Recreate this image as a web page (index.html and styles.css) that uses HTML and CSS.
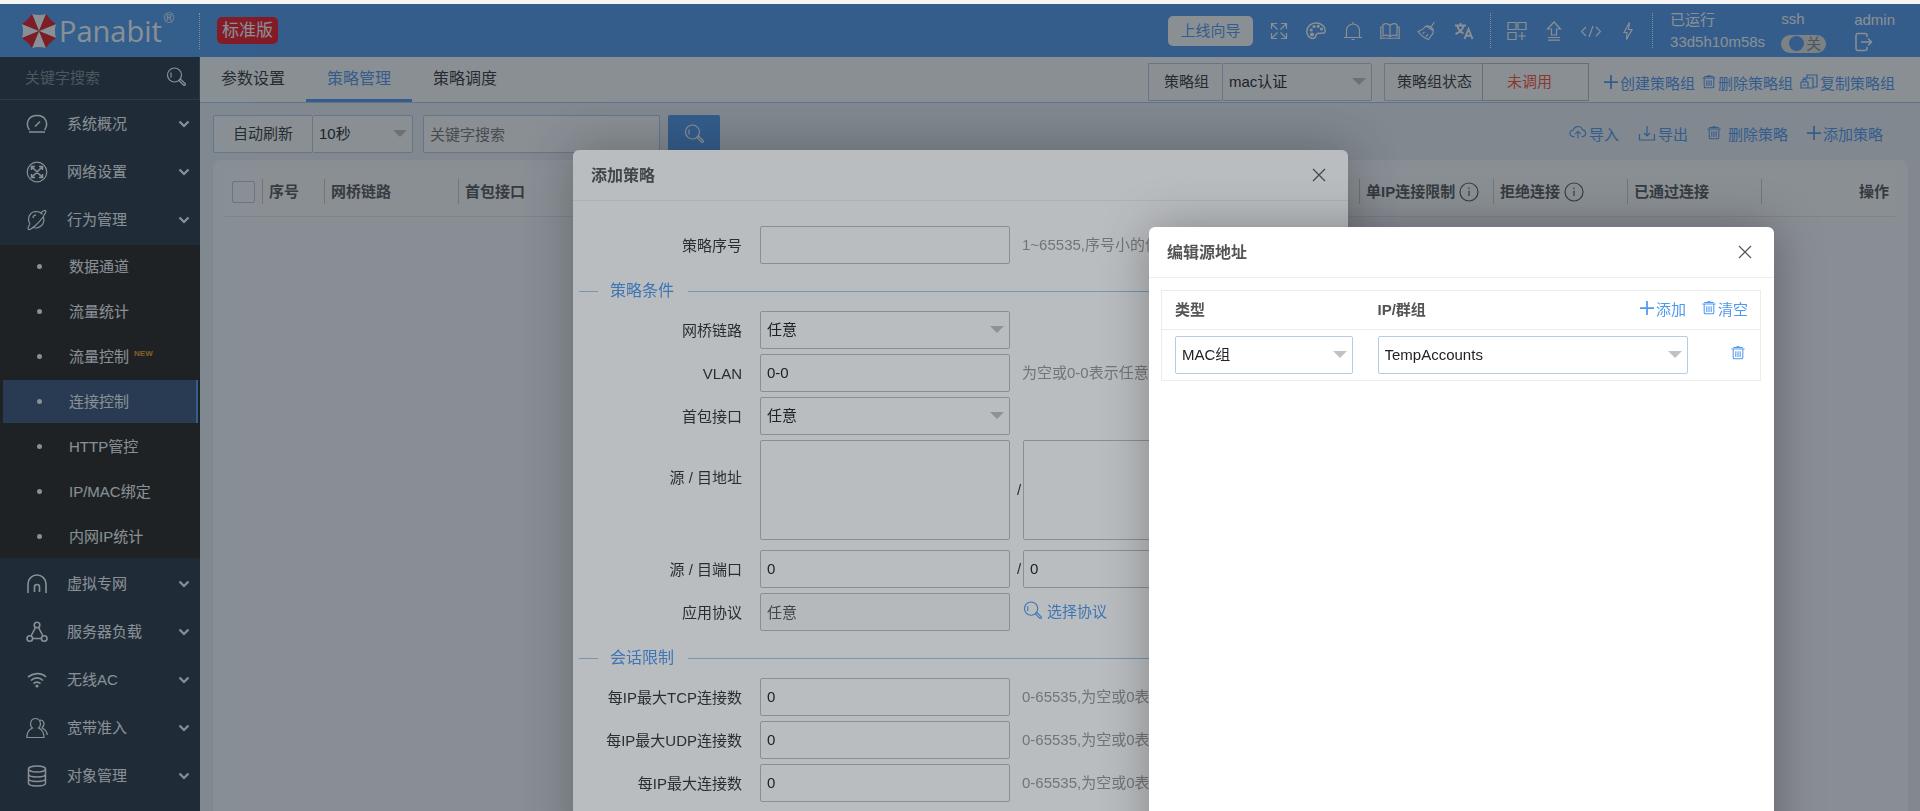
FILE: index.html
```html
<!DOCTYPE html>
<html lang="zh-CN">
<head>
    <meta charset="UTF-8">
    <meta name="viewport" content="width=device-width, initial-scale=1.0">
    <title>Panabit</title>
    <link rel="stylesheet" href="styles.css">
</head>
<body>
    <svg class="symbols" aria-hidden="true">
        <symbol id="i-search" viewBox="0 0 20 20"><circle cx="8.500" cy="8" r="7"/><path d="M5 5.500v5M13 13.500l1.500-1.500 4.500 4.500a1 1 0 0 1-1.500 1.500z"/></symbol>
        <symbol id="i-full" viewBox="0 0 20 20"><path d="M2.500 8V2.500H8M2.500 2.500l6 6M12 2.500h5.500V8M17.500 2.500l-6 6M2.500 12v5.500H8M2.500 17.500l6-6M17.500 12v5.500H12M17.500 17.500l-6-6"/></symbol>
        <symbol id="i-palette" viewBox="0 0 20 20"><path stroke-width="1.500" d="M10 2C4.500 2 .8 5.800.8 10.500c0 4 3 7 6.200 7 3.500 0 2-3 3.500-4.500 2.200-2.200 8.700 1.500 8.700-3.500C19.200 5 15 2 10 2z"/><g fill="currentColor"><circle cx="5.200" cy="9" r="1"/><circle cx="8" cy="5.500" r="1"/><circle cx="12.200" cy="5.300" r="1"/><circle cx="15.500" cy="8" r="1"/><circle cx="6" cy="13.500" r="1.500"/></g></symbol>
        <symbol id="i-bell" viewBox="0 0 20 20"><path d="M1 16.500h18M3.500 16.500V9.500a6.500 6.500 0 0 1 13 0v7M10 1v2M8.500 18.500h3"/></symbol>
        <symbol id="i-book" viewBox="0 0 20 20"><path d="M10 4.500C8 2.500 5 2.500 3 3.500V15c2-1 5-1 7 .8 2-1.800 5-1.800 7-.8V3.500c-2-1-5-1-7 1zM10 4.500V16M3 6H.8v11.500c3-.6 6-.8 9.200 0 3.200-.8 6.200-.6 9.200 0V6H17"/></symbol>
        <symbol id="i-brush" viewBox="0 0 20 20"><path d="M17.500 1l-3.500 5 2.500 3M9 5l7.500 5M9 5C6.500 8.500 4 9.500 1 10.500c3 4 6 6.500 10.500 8 1.500-3.500 5-4.500 5-8.500zM9.500 4.800L13 5.500l3.500 3M5.500 12.500l2-1.500M9 15.500l2-2"/></symbol>
        <symbol id="i-lang" viewBox="0 0 20 20"><path stroke-width="1.900" d="M1 4.500h11M6.500 2v2.500M9.500 5C8.500 9 5.500 11.500 1.500 13M3.500 5.500C4.500 9 7 11 9.500 12.500M10.500 18l4-10 4 10M12 14.800h5"/></symbol>
        <symbol id="i-grid" viewBox="0 0 20 20"><path d="M1 1.500h8v7H1zM11 1.500h8v7h-8zM1 11.500h8v7H1zM15 11v8M11 15h8"/></symbol>
        <symbol id="i-upload" viewBox="0 0 20 20"><path d="M7.500 14V8H3.500L10 1l6.500 7h-4v6zM4 16.500h12M4 19.200h12"/></symbol>
        <symbol id="i-code" viewBox="0 0 20 20"><path d="M5 6l-4.500 4.500L5 15M15 6l4.500 4.500L15 15M12 5L8 16"/></symbol>
        <symbol id="i-bolt" viewBox="0 0 20 20"><path d="M11.500 1.500L6 11.500h3l-.5 7L14 8.500h-3.500z"/></symbol>
        <symbol id="i-exit" viewBox="0 0 20 20"><path stroke-width="1.500" d="M13 5V3.500a2 2 0 0 0-2-2H4a2 2 0 0 0-2 2v13a2 2 0 0 0 2 2h7a2 2 0 0 0 2-2V15M7 10h11M14 6.500l3.500 3.500-3.500 3.500"/></symbol>
        <symbol id="i-gauge" viewBox="0 0 22 22"><path stroke-width="1.500" d="M3 19h16M3.500 17C-1 11 2 2.500 11 2.500S23 11 18.500 17M9 13.500l5-5"/></symbol>
        <symbol id="i-net" viewBox="0 0 22 22"><circle cx="11" cy="11" r="9.800"/><path stroke-width="1.500" d="M5.500 5.500l11 11M16.500 5.500l-11 11M5.500 9V5.500H9M13 5.500h3.500V9M5.500 13v3.500H9M13 16.500h3.500V13"/></symbol>
        <symbol id="i-planet" viewBox="0 0 22 22"><path d="M4 15C.5 9 4 2.800 10 2.500c3 0 5 1 6.500 2.800M17.500 8c1.500 5-1 10-7 11-1.500 0-3-.2-4-1M4 15c-2 3-2.500 5-1.500 5.500C5 21 13 14 17 8c2.500-4 3.500-6 2.500-6.500-1-.3-3 .8-5 2.500M7 9c0-2 1.200-3 3-3.200"/></symbol>
        <symbol id="i-arch" viewBox="0 0 22 22"><path stroke-width="1.600" d="M2 20v-9a9 9 0 0 1 18 0v9M8.500 19v-5a2.500 2.500 0 0 1 5 0v5"/></symbol>
        <symbol id="i-nodes" viewBox="0 0 22 22"><g stroke-width="1.600"><circle cx="11" cy="4" r="2.800"/><circle cx="3.800" cy="17.500" r="2.800"/><circle cx="18.200" cy="17.500" r="2.800"/><path d="M9.500 6.500L5 15M12.500 6.500L17 15M6.500 17.500h9"/></g></symbol>
        <symbol id="i-wifi" viewBox="0 0 22 22"><path stroke-width="1.700" d="M2 8c5-4 13-5 18 0M5 11.500c3.500-3.500 8.500-3.500 12 0M7.500 14.500c2.500-2 4.500-2 7 0"/><circle cx="11" cy="17" r="1" fill="currentColor"/></symbol>
        <symbol id="i-users" viewBox="0 0 22 22"><path d="M6.500 11C3 8 4.500 1.500 9.500 1.500S16 8 12.500 11c3.500 1.500 5.500 4 5.500 9.500H.8C.8 15 3 12.500 6.500 11zM14 3c4 0 5.500 4.500 2 8 3.500 1.500 5 3.500 5.200 7"/></symbol>
        <symbol id="i-db" viewBox="0 0 22 22"><g stroke-width="1.500"><ellipse cx="11" cy="4" rx="8.500" ry="3"/><path d="M2.500 4v14c0 4 17 4 17 0V4M2.500 9c0 4 17 4 17 0M2.500 13.500c0 4 17 4 17 0"/></g></symbol>
        <symbol id="i-down" viewBox="0 0 12 12"><path stroke-width="2.200" d="M1.500 3.500L6 8l4.500-4.500"/></symbol>
        <symbol id="i-plus" viewBox="0 0 16 16"><path stroke-width="2" d="M8 0v16M0 8h16"/></symbol>
        <symbol id="i-trash" viewBox="0 0 16 16"><path d="M.5 3.500h15M2.500 1.800h11M6 1h4M2.500 4v9a1.500 1.500 0 0 0 1.500 1.500h8a1.500 1.500 0 0 0 1.500-1.500V4M5.500 6v6.500M8 6v6.500M10.500 6v6.500"/></symbol>
        <symbol id="i-copy" viewBox="0 0 18 16"><path d="M7 4V1h10v12h-4M4 6V4h9v10H8M1 8h7v6H1zM3 8V5.500h3V8M3 11h3"/></symbol>
        <symbol id="i-cloud" viewBox="0 0 20 16"><path d="M6 12H4.500A3.500 3.500 0 0 1 4.500 5 5.500 5.500 0 0 1 15 4.500a3.800 3.800 0 0 1 .5 7.500H14M10 14V6.500M7 9l3-3 3 3"/></symbol>
        <symbol id="i-export" viewBox="0 0 18 16"><path d="M1.500 9v6h15V9M9 1v10M6 8l3 3 3-3"/></symbol>
        <symbol id="i-close" viewBox="0 0 14 14"><path d="M1 1l12 12M13 1L1 13"/></symbol>
        <symbol id="i-info" viewBox="0 0 20 20"><circle cx="10" cy="10" r="9"/><path d="M10 8.500V14M10 5.500V7"/></symbol>
    </svg>

    <header class="header">
        <div class="logo">
            <svg class="logo-mark" viewBox="-18 -18 36 36">
                <path fill="#fff" d="M-7-17Q0-15 7-17L0 0zM17-7Q15 0 17 7L0 0zM7 17Q0 15-7 17L0 0zM-17 7Q-15 0-17-7L0 0z"/>
                <path fill="#e8141c" d="M7-17Q11-11 17-7L0 0zM17 7Q11 11 7 17L0 0zM-7 17Q-11 11-17 7L0 0zM-17-7Q-11-11-7-17L0 0z"/>
            </svg>
            <span class="logo-name">Panabit</span><span class="logo-reg">®</span>
        </div>
        <span class="badge">标准版</span>
        <button class="guide" type="button">上线向导</button>
        <nav class="tools">
            <button type="button" aria-label="全屏"><svg><use href="#i-full"/></svg></button>
            <button type="button" aria-label="主题"><svg><use href="#i-palette"/></svg></button>
            <button type="button" aria-label="通知"><svg><use href="#i-bell"/></svg></button>
            <button type="button" aria-label="手册"><svg><use href="#i-book"/></svg></button>
            <button type="button" aria-label="清理"><svg><use href="#i-brush"/></svg></button>
            <button type="button" aria-label="语言"><svg><use href="#i-lang"/></svg></button>
        </nav>
        <nav class="tools tools-sys">
            <button type="button" aria-label="应用"><svg><use href="#i-grid"/></svg></button>
            <button type="button" aria-label="升级"><svg><use href="#i-upload"/></svg></button>
            <button type="button" aria-label="终端"><svg><use href="#i-code"/></svg></button>
            <button type="button" aria-label="电源"><svg><use href="#i-bolt"/></svg></button>
        </nav>
        <div class="status uptime"><span>已运行</span><span>33d5h10m58s</span></div>
        <div class="status ssh">
            <label for="ssh">ssh</label>
            <label class="switch"><input type="checkbox" id="ssh"><span>关</span></label>
        </div>
        <div class="status user">
            <span>admin</span>
            <button type="button" aria-label="退出"><svg><use href="#i-exit"/></svg></button>
        </div>
    </header>

    <div class="layout">
        <aside class="sidebar">
            <div class="side-search">
                <input type="text" placeholder="关键字搜索" aria-label="关键字搜索">
                <svg><use href="#i-search"/></svg>
            </div>
            <nav class="menu">
                <a href="#"><svg><use href="#i-gauge"/></svg>系统概况<svg class="arrow"><use href="#i-down"/></svg></a>
                <a href="#"><svg><use href="#i-net"/></svg>网络设置<svg class="arrow"><use href="#i-down"/></svg></a>
                <a href="#"><svg><use href="#i-planet"/></svg>行为管理<svg class="arrow"><use href="#i-down"/></svg></a>
                <div class="submenu">
                    <a href="#">数据通道</a>
                    <a href="#">流量统计</a>
                    <a href="#">流量控制<span class="new">NEW</span></a>
                    <a href="#" class="active">连接控制</a>
                    <a href="#">HTTP管控</a>
                    <a href="#">IP/MAC绑定</a>
                    <a href="#">内网IP统计</a>
                </div>
                <a href="#"><svg><use href="#i-arch"/></svg>虚拟专网<svg class="arrow"><use href="#i-down"/></svg></a>
                <a href="#"><svg><use href="#i-nodes"/></svg>服务器负载<svg class="arrow"><use href="#i-down"/></svg></a>
                <a href="#"><svg><use href="#i-wifi"/></svg>无线AC<svg class="arrow"><use href="#i-down"/></svg></a>
                <a href="#"><svg><use href="#i-users"/></svg>宽带准入<svg class="arrow"><use href="#i-down"/></svg></a>
                <a href="#"><svg><use href="#i-db"/></svg>对象管理<svg class="arrow"><use href="#i-down"/></svg></a>
            </nav>
        </aside>

        <main class="main">
            <div class="tabbar">
                <nav class="tabs">
                    <a href="#">参数设置</a>
                    <a href="#" class="active">策略管理</a>
                    <a href="#">策略调度</a>
                </nav>
                <div class="group-bar">
                    <div class="combo">
                        <label for="group">策略组</label>
                        <div class="select group-select"><select id="group"><option>mac认证</option></select></div>
                    </div>
                    <div class="combo state">
                        <span class="combo-label">策略组状态</span>
                        <span class="state-value">未调用</span>
                    </div>
                    <div class="group-links">
                        <a href="#" class="link"><svg><use href="#i-plus"/></svg>创建策略组</a>
                        <a href="#" class="link"><svg><use href="#i-trash"/></svg>删除策略组</a>
                        <a href="#" class="link"><svg class="wide"><use href="#i-copy"/></svg>复制策略组</a>
                    </div>
                </div>
            </div>

            <div class="content">
                <div class="toolbar">
                    <div class="combo refresh">
                        <label for="refresh">自动刷新</label>
                        <div class="select"><select id="refresh"><option>10秒</option></select></div>
                    </div>
                    <input class="keyword" type="text" placeholder="关键字搜索" aria-label="关键字搜索">
                    <button class="search-btn" type="button" aria-label="搜索"><svg><use href="#i-search"/></svg></button>
                    <div class="toolbar-links">
                        <a href="#" class="link"><svg class="wide"><use href="#i-cloud"/></svg>导入</a>
                        <a href="#" class="link"><svg class="wide"><use href="#i-export"/></svg>导出</a>
                        <a href="#" class="link spaced"><svg><use href="#i-trash"/></svg>删除策略</a>
                        <a href="#" class="link"><svg><use href="#i-plus"/></svg>添加策略</a>
                    </div>
                </div>

                <div class="panel">
                    <table class="grid">
                        <colgroup>
                            <col class="c-check"><col class="c-no"><col class="c-mid"><col>
                            <col class="c-mid"><col class="c-mid"><col class="c-mid"><col class="c-mid">
                        </colgroup>
                        <thead>
                            <tr>
                                <th><input type="checkbox" aria-label="全选"></th>
                                <th><div>序号</div></th>
                                <th><div>网桥链路</div></th>
                                <th><div>首包接口</div></th>
                                <th><div>单IP连接限制<svg><use href="#i-info"/></svg></div></th>
                                <th><div>拒绝连接<svg><use href="#i-info"/></svg></div></th>
                                <th><div>已通过连接</div></th>
                                <th><div class="right">操作</div></th>
                            </tr>
                        </thead>
                    </table>
                </div>
            </div>
        </main>
    </div>

    <div class="shade"></div>

    <section class="dialog policy" role="dialog" aria-labelledby="policyTitle">
        <div class="dialog-head">
            <h2 id="policyTitle">添加策略</h2>
            <button type="button" aria-label="关闭"><svg><use href="#i-close"/></svg></button>
        </div>
        <form class="policy-form">
            <div class="row">
                <label for="no">策略序号</label>
                <input type="text" id="no">
                <span class="hint">1~65535,序号小的优先</span>
            </div>
            <h3 class="section"><span>策略条件</span></h3>
            <div class="row">
                <label for="bridge">网桥链路</label>
                <div class="select"><select id="bridge"><option>任意</option></select></div>
            </div>
            <div class="row">
                <label for="vlan">VLAN</label>
                <input type="text" id="vlan" value="0-0">
                <span class="hint">为空或0-0表示任意</span>
            </div>
            <div class="row">
                <label for="iface">首包接口</label>
                <div class="select"><select id="iface"><option>任意</option></select></div>
            </div>
            <div class="row row-area">
                <label for="srcAddr">源 / 目地址</label>
                <textarea id="srcAddr"></textarea>
                <span class="slash">/</span>
                <textarea aria-label="目地址"></textarea>
            </div>
            <div class="row">
                <label for="srcPort">源 / 目端口</label>
                <input type="text" id="srcPort" value="0">
                <span class="slash">/</span>
                <input type="text" value="0" aria-label="目端口">
            </div>
            <div class="row">
                <label for="proto">应用协议</label>
                <input type="text" id="proto" value="任意" disabled>
                <a href="#" class="link pick"><svg><use href="#i-search"/></svg>选择协议</a>
            </div>
            <h3 class="section"><span>会话限制</span></h3>
            <div class="row">
                <label for="tcp">每IP最大TCP连接数</label>
                <input type="text" id="tcp" value="0">
                <span class="hint">0-65535,为空或0表示不限制</span>
            </div>
            <div class="row">
                <label for="udp">每IP最大UDP连接数</label>
                <input type="text" id="udp" value="0">
                <span class="hint">0-65535,为空或0表示不限制</span>
            </div>
            <div class="row">
                <label for="conn">每IP最大连接数</label>
                <input type="text" id="conn" value="0">
                <span class="hint">0-65535,为空或0表示不限制</span>
            </div>
        </form>
    </section>

    <div class="shade"></div>

    <section class="dialog source" role="dialog" aria-labelledby="sourceTitle">
        <div class="dialog-head">
            <h2 id="sourceTitle">编辑源地址</h2>
            <button type="button" aria-label="关闭"><svg><use href="#i-close"/></svg></button>
        </div>
        <table class="addr">
            <colgroup><col class="c-type"><col class="c-ip"><col></colgroup>
            <thead>
                <tr>
                    <th>类型</th>
                    <th class="ip-head">
                        IP/群组
                    </th>
                    <th class="links-head">
                        <div class="addr-links">
                            <a href="#" class="link"><svg><use href="#i-plus"/></svg>添加</a>
                            <a href="#" class="link"><svg><use href="#i-trash"/></svg>清空</a>
                        </div>
                    </th>
                </tr>
            </thead>
            <tbody>
                <tr>
                    <td><div class="select type-select"><select aria-label="类型"><option>MAC组</option></select></div></td>
                    <td colspan="2">
                        <div class="ip-cell">
                            <div class="select ip-select"><select aria-label="IP/群组"><option>TempAccounts</option></select></div>
                            <a href="#" class="link remove" aria-label="删除"><svg><use href="#i-trash"/></svg></a>
                        </div>
                    </td>
                </tr>
            </tbody>
        </table>
    </section>
</body>
</html>
```
FILE: styles.css
```css
* {
    box-sizing: border-box;
}
html {
    overflow: hidden;
}
body {
    margin: 0;
    height: 100vh;
    display: flex;
    flex-direction: column;
    border-top: 4px solid #f4f6f6;
    font: 15px/20px "Liberation Sans", "Noto Sans CJK SC", sans-serif;
    color: #333;
    overflow: hidden;
}
a {
    color: inherit;
    text-decoration: none;
}
button {
    border: 0;
    padding: 0;
    background: none;
    color: inherit;
    font: inherit;
}
input, select, textarea {
    font: inherit;
    color: #222;
    background: #fff;
    border: 1px solid #b5cbe6;
    border-radius: 2px;
    outline: 0;
}
svg {
    display: block;
    flex: none;
    fill: none;
    stroke: currentColor;
    stroke-width: 1.2;
}
.symbols {
    display: none;
}

/* header */
.header {
    display: flex;
    align-items: center;
    height: 53px;
    flex: none;
    padding-right: 25px;
    background: #5099ec;
    color: #fff;
}
.logo {
    display: flex;
    align-items: center;
    width: 200px;
    height: 36px;
    padding-left: 21px;
    border-right: 1px dotted #fff;
}
.logo-mark {
    width: 36px;
    height: 36px;
    stroke: none;
}
.logo-name {
    margin-left: 2px;
    font: 500 29px/36px "Open Sans", sans-serif;
}
.logo-reg {
    align-self: flex-start;
    margin-left: 2px;
    font-size: 14px;
    line-height: 10px;
}
.badge {
    margin-left: 17px;
    padding: 0 5px;
    border-radius: 5px;
    background: #f2121e;
    font-size: 17px;
    line-height: 27px;
}
.guide {
    margin-left: auto;
    width: 85px;
    height: 30px;
    border-radius: 5px;
    background: #fff;
    color: #5099ec;
}
.tools {
    display: flex;
    align-items: center;
    gap: 17px;
    height: 35px;
    padding: 0 16px;
    border-right: 1px dotted #fff;
}
.tools-sys {
    padding-right: 14px;
}
.tools svg, .user svg {
    width: 20px;
    height: 20px;
}
.status {
    display: flex;
    flex-direction: column;
    gap: 2px;
    line-height: 20px;
}
.uptime {
    margin-left: 17px;
}
.ssh {
    gap: 6px;
    margin-left: 16px;
}
.user {
    margin-left: 28px;
}
.switch {
    display: flex;
    align-items: center;
    height: 18px;
    padding: 0 5px 0 8px;
    border-radius: 9px;
    background: #e2e2de;
    color: #888;
}
.switch input {
    appearance: none;
    width: 15px;
    height: 15px;
    margin: 0 2px 0 0;
    border: 0;
    border-radius: 50%;
    background: #5099ec;
}

/* sidebar */
.layout {
    display: flex;
    flex: 1;
    min-height: 0;
}
.sidebar {
    width: 200px;
    flex: none;
    background: #26313f;
    color: #fff;
    overflow: hidden;
}
.side-search {
    display: flex;
    align-items: center;
    height: 43px;
    padding: 0 13px 0 25px;
    border: solid #46505a;
    border-width: 0 1px 1px 0;
}
.side-search input {
    flex: 1;
    min-width: 0;
    padding: 0;
    border: 0;
    background: none;
    color: #fff;
}
.side-search input::placeholder {
    color: #85898e;
}
.side-search svg {
    width: 20px;
    height: 20px;
    margin-bottom: 3px;
}
.menu > a {
    display: flex;
    align-items: center;
    height: 47px;
    margin-bottom: 1px;
    padding: 0 10px 0 26px;
}
.menu > a svg {
    width: 22px;
    height: 22px;
    margin-right: 19px;
}
.menu > a .arrow {
    width: 12px;
    height: 12px;
    margin: 0 0 0 auto;
}
.submenu {
    margin: 2px 0 1px;
    background: #231e1a;
}
.submenu a {
    display: flex;
    align-items: center;
    height: 43px;
    margin: 0 2px 2px 3px;
    padding-left: 34px;
}
.submenu a::before {
    content: "";
    width: 5px;
    height: 5px;
    margin-right: 27px;
    border-radius: 50%;
    background: #fff;
}
.submenu .active {
    background: #385075;
    border-right: 2px solid #5099ec;
}
.new {
    margin: 0 0 6px 5px;
    color: #f59b20;
    font-size: 8px;
    font-weight: bold;
    line-height: 8px;
}

/* top tabs */
.main {
    display: flex;
    flex-direction: column;
    flex: 1;
    min-width: 0;
    background: #ecf0f4;
}
.tabbar {
    display: flex;
    height: 46px;
    background: #fff;
    border-bottom: 1px solid #aac6ea;
}
.tabs {
    display: flex;
    font-size: 16px;
    line-height: 40px;
}
.tabs a {
    padding: 2px 21px 0;
    border-bottom: 3px solid transparent;
}
.tabs .active {
    color: #5099ec;
    border-color: #5099ec;
}
.group-bar {
    display: flex;
    margin-left: auto;
    padding: 6px 25px 0 0;
}
.combo {
    display: flex;
    height: 38px;
    background: #fff;
}
.combo > label, .combo-label {
    padding: 0 13px 0 15px;
    line-height: 35px;
    border: 1px solid #b5cbe6;
    border-right: 0;
    border-radius: 2px 0 0 2px;
}
.combo .combo-label {
    padding: 0 10px 0 12px;
}
.combo.refresh > label {
    padding: 0 19px;
}
.refresh .select {
    width: 101px;
}
.group-select {
    width: 150px;
}
.state {
    margin: 0 15px 0 12px;
}
.state-value {
    padding: 0 36px 0 24px;
    border: 1px solid #bbb;
    color: #ff5030;
    line-height: 35px;
}
.select {
    position: relative;
    height: 38px;
}
.select select {
    appearance: none;
    width: 100%;
    height: 100%;
    padding: 0 24px 0 6px;
}
.select::after {
    content: "";
    position: absolute;
    right: 6px;
    top: 15px;
    border: 7px solid transparent;
    border-top-color: #c2c2c2;
    border-bottom: 0;
    pointer-events: none;
}
.group-links, .toolbar-links, .addr-links {
    display: flex;
    align-items: center;
}
.group-links {
    gap: 7px;
    padding-top: 2px;
}
.link {
    display: flex;
    align-items: center;
    gap: 2px;
    color: #4f98ee;
}
.link svg {
    width: 14px;
    height: 16px;
    margin-bottom: 4px;
}
.link .wide {
    width: 18px;
}

/* table page */
.content {
    display: flex;
    flex-direction: column;
    flex: 1;
    padding: 12px 12px 0 13px;
}
.toolbar {
    display: flex;
    margin-bottom: 7px;
}
.keyword {
    width: 237px;
    height: 38px;
    margin: 0 8px 0 10px;
    padding: 0 6px;
}
::placeholder {
    color: #757575;
}
.search-btn {
    display: flex;
    align-items: center;
    justify-content: center;
    width: 52px;
    border-radius: 2px;
    background: #5099ec;
    color: #fff;
}
.search-btn svg {
    width: 20px;
    height: 20px;
}
.toolbar-links {
    gap: 19px;
    margin-left: auto;
    padding: 2px 25px 0 0;
}
.spaced {
    gap: 7px;
}
.panel {
    flex: 1;
    padding: 8px 13px 0 12px;
    border-radius: 8px 8px 0 0;
    background: #fcfaff;
}
.grid {
    width: 100%;
    table-layout: fixed;
    border-collapse: collapse;
    background: #fff;
}
.c-check {
    width: 37px;
}
.c-no {
    width: 62px;
}
.c-mid {
    width: 134px;
}
.grid th {
    height: 48px;
    padding: 0;
    text-align: left;
    color: #555;
    border-bottom: 1px solid #e8e8e8;
}
.grid th div {
    display: flex;
    align-items: center;
    gap: 4px;
    height: 25px;
    padding-left: 6px;
    border-left: 1px solid #ccc;
}
.grid th .right {
    justify-content: flex-end;
    padding-right: 6px;
}
.grid svg {
    width: 20px;
    height: 20px;
}
.grid input {
    appearance: none;
    display: block;
    width: 23px;
    height: 22px;
    margin: 0 0 0 7px;
    border-color: #c8c8c8;
}

/* dialogs */
.shade {
    position: fixed;
    inset: 4px 0 0;
    background: rgba(25, 38, 48, .3);
}
.dialog {
    position: fixed;
    min-height: 700px;
    border-radius: 6px;
    background: #fff;
    box-shadow: 1px 1px 50px rgba(0, 0, 0, .3);
}
.policy {
    top: 150px;
    left: calc(50% - 387px);
    width: 775px;
}
.source {
    top: 227px;
    right: 146px;
    width: 625px;
}
.dialog-head {
    display: flex;
    align-items: center;
    justify-content: space-between;
    height: 51px;
    padding: 0 22px 0 18px;
    border-bottom: 1px solid #eee;
    color: #555;
}
.dialog-head h2 {
    margin: 0;
    padding-top: 2px;
    font-size: 16px;
    font-weight: 600;
}
.dialog-head svg {
    width: 14px;
    height: 14px;
}
.policy-form {
    padding: 25px 6px;
}
.row {
    display: flex;
    align-items: center;
    margin-bottom: 5px;
}
.row > label {
    width: 163px;
    margin-right: 18px;
    padding-top: 2px;
    text-align: right;
}
.row > input, .row .select, .row textarea {
    width: 250px;
    height: 38px;
}
.row input {
    padding: 0 6px 2px;
}
.row input, .row select, .row textarea {
    border-color: #bdbdbd;
}
.row input:disabled {
    background: #fafafa;
    color: #555;
}
.row textarea {
    height: 100px;
    resize: none;
}
.row-area {
    margin-bottom: 10px;
}
.row-area label {
    align-self: flex-start;
    margin-top: 26px;
}
.slash {
    width: 13px;
    padding-left: 7px;
}
.hint {
    margin-left: 12px;
    color: #999;
}
.pick {
    margin-left: 13px;
    gap: 5px;
}
.pick svg {
    width: 19px;
    height: 19px;
}
.section {
    display: flex;
    align-items: center;
    margin: 17px 0 10px;
    color: #4f98ee;
    font-size: 16px;
    font-weight: 400;
}
.section::before, .section::after {
    content: "";
    width: 19px;
    border-top: 1px solid #a4c3ea;
}
.section::after {
    flex: 1;
}
.section span {
    padding: 0 14px 0 12px;
}
.addr {
    width: 600px;
    margin: 12px;
    table-layout: fixed;
    border-collapse: collapse;
    border: 1px solid #ececec;
}
.addr th, .addr td {
    padding: 0 12px 0 13px;
    text-align: left;
    color: #555;
}
.addr th {
    height: 39px;
    border-bottom: 1px solid #ececec;
}
.addr td {
    height: 51px;
}
.c-type {
    width: 203px;
}
.c-ip {
    width: 240px;
}
.addr-links {
    justify-content: flex-end;
    gap: 16px;
    font-weight: 400;
}
.type-select {
    width: 178px;
}
.ip-cell {
    display: flex;
    align-items: center;
    justify-content: space-between;
    padding-right: 3px;
}
.ip-select {
    width: 310px;
}
```
